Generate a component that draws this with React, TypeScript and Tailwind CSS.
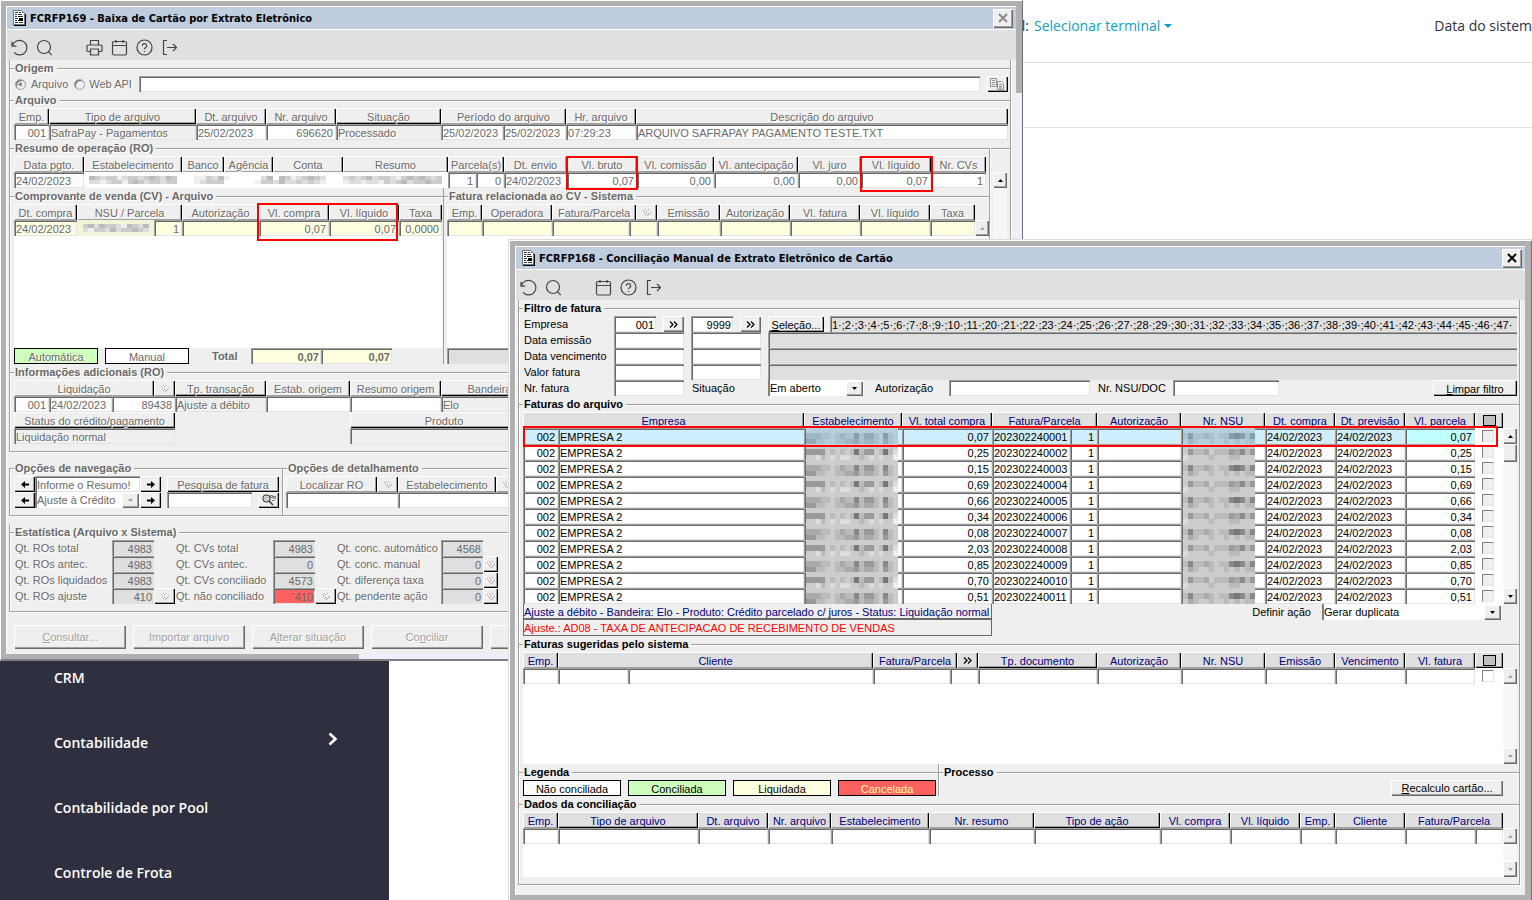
import type { ReactNode } from "react";

type Head = { label?: string; span?: number; raised?: boolean; icon?: ReactNode; overlay?: string };
type Cell = { text?: string; span?: number; className?: string; node?: ReactNode; bare?: boolean };
type Col = { w?: string; right?: boolean };

const RAISED =
  "shadow-[inset_1px_1px_0_#fff,inset_-1px_-1px_0_#000,inset_-2px_-2px_0_#a0a0a0]";
const SOFT =
  "shadow-[inset_1px_1px_0_#fff,inset_-1px_-1px_0_#696969,inset_-2px_-2px_0_#a0a0a0]";
const SUNKEN =
  "shadow-[inset_1px_1px_0_#a0a0a0,inset_2px_2px_0_#696969,inset_-1px_-1px_0_#e3e3e3]";
const EMBOSS = "[text-shadow:1px_1px_0_#fff]";

/* ---------- icons ---------- */

const DocIcon = () => (
  <svg width="13" height="16" viewBox="0 0 13 16" shapeRendering="crispEdges" aria-hidden="true">
    <path d="M0 0h9v1h1v1h1v1h1v12H0z" fill="#777" />
    <path d="M1 1h8v2h2v11H1z" fill="#fff" />
    <path d="M12 4h1v12H1v-1h11z" fill="#000" />
    <path
      d="M2 2h3v1H2zM6 2h2v1H6zM2 4h2v1H2zM5 4h4v1H5zM2 6h2v1H2zM7 6h3v1H7zM2 8h3v1H2zM2 10h2v1H2zM2 12h3v1H2zM6 12h4v1H6z"
      fill="#333"
    />
    <path d="M5 6h2v1H5zM6 8h4v2H6zM5 10h5v1H5z" fill="#000" />
  </svg>
);

const iconPaths: Record<string, ReactNode> = {
  Atualizar: <path d="M1 2.8v4.4h4.4M1.4 7A7.3 7.3 0 1 1 3 13.4" />,
  Pesquisar: (
    <>
      <circle cx="8" cy="8" r="6.5" />
      <path d="m12.6 12.8 3.2 3.4" />
    </>
  ),
  Imprimir: (
    <>
      <path d="M4.5 6V1.5h8V6M4.5 12.5H1.8a.8.8 0 0 1-.8-.8V7a1 1 0 0 1 1-1h13a1 1 0 0 1 1 1v4.7a.8.8 0 0 1-.8.8h-2.7" />
      <path d="M4.5 10h8v6h-8z" />
    </>
  ),
  Agenda: (
    <>
      <path d="M1.5 4A1.5 1.5 0 0 1 3 2.5h11A1.5 1.5 0 0 1 15.500 4v10.500A1.5 1.5 0 0 1 14 16H3a1.5 1.5 0 0 1-1.500-1.500zM1.500 6.500h14" />
      <path d="M5 1v3M12 1v3" />
    </>
  ),
  Ajuda: (
    <>
      <circle cx="8.5" cy="8.5" r="7.5" />
      <path d="M6.3 6.8a2.2 2.2 0 1 1 3.2 2c-.8.4-1 .8-1 1.5M8.5 12v1" />
    </>
  ),
  Sair: <path d="M6 1.5H2.5v14H6M6 8.5h9.5M12 5l3.5 3.500L12 12" />,
};

const ToolIcon = ({ name }: { name: string }) => (
  <button type="button" aria-label={name} className="flex h-7 w-[25px] items-center justify-center">
    <svg width="17" height="17" viewBox="0 0 17 17" fill="none" stroke="#444" strokeWidth="1.2" strokeLinejoin="round">
      {iconPaths[name]}
    </svg>
  </button>
);

const Chevrons = ({ muted }: { muted?: boolean }) =>
  muted ? (
    <svg width="10" height="9" viewBox="0 0 10 9" fill="#a0a0a0" shapeRendering="crispEdges" aria-hidden="true">
      <path d="M1 2h1v1H1zM3 1h1v1H3zM2 4h1v1H2zM4 3h1v1H4zM6 1h1v1H6zM3 6h1v1H3zM4 5h1v1H4zM7 5h1v1H7zM8 4h1v1H8zM6 6h1v1H6zM5 7h1v1H5z" />
    </svg>
  ) : (
    <svg width="9" height="7" viewBox="0 0 9 7" fill="none" stroke="#000" aria-hidden="true">
      <path d="M1 .5l3 3-3 3M5 .5l3 3-3 3" strokeWidth="1.2" />
    </svg>
  );

const Triangle = ({ down, muted }: { down?: boolean; muted?: boolean }) => (
  <svg width="5" height="3" viewBox="0 0 5 3" aria-hidden="true">
    <path d={down ? "M0 0h5L2.5 3z" : "M0 3h5L2.5 0z"} fill={muted ? "#a0a0a0" : "#000"} />
  </svg>
);

const Arrow = ({ left }: { left?: boolean }) => (
  <svg width="8" height="7" viewBox="0 0 8 7" aria-hidden="true">
    <path d={left ? "M0 3.5 4 0v2.5h4v2H4V7z" : "M8 3.5 4 0v2.5H0v2h4V7z"} />
  </svg>
);

const BoxIcon = () => <span className="block h-[11px] w-[13px] border border-black bg-[#c0c0c0]" />;

// Grey block pattern over hidden values: one hex digit per block
const Mosaic = ({ rows, tint, base }: { rows: string[]; tint?: boolean; base?: string }) => {
  const cols = rows[0].length;
  return (
    <svg
      className="block h-4 w-full"
      viewBox={`0 0 ${cols} ${rows.length}`}
      preserveAspectRatio="none"
      shapeRendering="crispEdges"
      aria-hidden="true"
    >
      <rect width={cols} height={rows.length} fill={base ?? "#cdcdcd"} />
      {rows.map((row, y) =>
        row.split("").map((c, x) => {
          if (c === ".") return null;
          const v = parseInt(c, 16) * 17;
          return <rect key={`${x}-${y}`} x={x} y={y} width="1" height="1" fill={`rgb(${v},${v},${v})`} />;
        })
      )}
      {tint && <rect width={cols} height={rows.length} fill="#7fd4ff" opacity="0.3" />}
    </svg>
  );
};

/* ---------- building blocks ---------- */

const Grid = ({
  cols,
  head,
  rows,
  headClass,
  cellClass = "bg-white",
  selected,
}: {
  cols: Col[];
  head: Head[];
  rows: Cell[][];
  headClass: string;
  cellClass?: string;
  selected?: number;
}) => (
  <table className="w-full table-fixed border-collapse">
    <colgroup>
      {cols.map((c, i) => (
        <col key={i} className={c.w} />
      ))}
    </colgroup>
    <thead>
      <tr className="h-4">
        {head.map((h, i) => (
          <th
            key={i}
            colSpan={h.span}
            className={`relative h-4 p-0 font-normal whitespace-nowrap ${headClass} ${
              h.raised
                ? RAISED
                : "shadow-[inset_1px_1px_0_#fff,inset_-1px_0_0_#000,inset_-2px_-1px_0_#a0a0a0]"
            }`}
          >
            <span className="flex h-4 items-center justify-center pt-px">{h.icon ?? h.label}</span>
            {h.overlay && <span className={`absolute z-10 border-2 border-[#ff0000] ${h.overlay}`} />}
          </th>
        ))}
      </tr>
    </thead>
    <tbody>
      {rows.map((row, r) => {
        let at = 0;
        return (
          <tr key={r} className="relative h-4">
            {row.map((cell, i) => {
              const col = cols[at];
              at += cell.span ?? 1;
              const bg = cell.className ?? (selected === r ? "bg-[#cfefff]" : cellClass);
              return (
                <td
                  key={i}
                  colSpan={cell.span}
                  className={`h-4 overflow-hidden p-0 whitespace-nowrap ${bg} ${cell.bare ? "" : SUNKEN}`}
                >
                  {cell.node ?? (
                    <span className={`block h-4 pt-px leading-4 ${col?.right ? "pr-[3px] text-right" : "pl-[2px]"}`}>
                      {cell.text}
                    </span>
                  )}
                  {selected === r && i === row.length - 1 && (
                    <span className="absolute -top-[2px] right-[5px] left-0 z-10 h-[21px] border-2 border-[#ff0000]" />
                  )}
                </td>
              );
            })}
          </tr>
        );
      })}
    </tbody>
  </table>
);

const GroupTitle = ({ children, first }: { children: ReactNode; first?: boolean }) => (
  <div className={`flex h-4 items-center ${first ? "-mt-2" : ""}`}>
    <span className="h-px w-1 bg-[#a0a0a0] shadow-[0_1px_0_#fff]" />
    <h2 className="pr-[3px] pl-px text-[11px] leading-4 font-bold whitespace-nowrap">{children}</h2>
    <span className="h-px flex-1 bg-[#a0a0a0] shadow-[0_1px_0_#fff]" />
  </div>
);

const Box = ({ children, className = "" }: { children: ReactNode; className?: string }) => (
  <section
    className={`border-x border-b border-[#a0a0a0] pb-[7px] shadow-[1px_1px_0_#fff,inset_1px_0_0_#fff] ${className}`}
  >
    {children}
  </section>
);

const ScrollBar = ({ muted, thumb }: { muted?: boolean; thumb?: boolean }) => (
  <div className="flex w-[14px] shrink-0 flex-col bg-[#f6f6f6]">
    <button type="button" aria-label="Rolar para cima" className={`flex h-4 items-center justify-center bg-[#efefef] ${SOFT}`}>
      <Triangle muted={muted} />
    </button>
    {thumb && <span className={`h-[18px] bg-[#efefef] ${SOFT}`} />}
    <span className="flex-1" />
    <button type="button" aria-label="Rolar para baixo" className={`flex h-4 items-center justify-center bg-[#efefef] ${SOFT}`}>
      <Triangle down muted={muted} />
    </button>
  </div>
);

const TitleBar = ({ title, disabled }: { title: string; disabled?: boolean }) => (
  <header className="flex h-[23px] items-center border-b border-white bg-[#bfcddf] pr-[3px] pl-[6px]">
    <DocIcon />
    <h1 className="flex-1 pt-px pl-1 font-['DejaVu_Sans_Condensed','DejaVu_Sans',sans-serif] text-[11px] font-bold text-black">
      {title}
    </h1>
    <button
      type="button"
      aria-label="Fechar"
      disabled={disabled}
      className={`flex h-[19px] w-5 items-center justify-center bg-[#efefef] ${SOFT}`}
    >
      <svg width="10" height="10" viewBox="0 0 10 10" stroke={disabled ? "#8a8a8a" : "#000"} strokeWidth="2">
        <path d="M1 1l8 8M9 1L1 9" />
      </svg>
    </button>
  </header>
);

const Field = ({ label, value, className }: { label: string; value?: string; className: string }) => (
  <input aria-label={label} defaultValue={value} className={`block h-4 min-w-0 px-[2px] pt-px outline-none ${SUNKEN} ${className}`} />
);

const Select = ({ id, value, className, muted }: { id: string; value: string; className: string; muted?: boolean }) => (
  <div className={`relative h-4 ${className}`}>
    <select
      id={id}
      aria-label={value}
      defaultValue={value}
      className="block h-4 w-full appearance-none border-l-2 border-[#808080] bg-white outline-none"
    >
      <option>{value}</option>
    </select>
    <span className={`pointer-events-none absolute right-px bottom-0 flex h-[15px] w-[17px] items-center justify-center bg-[#efefef] ${SOFT}`}>
      <Triangle down muted={muted} />
    </span>
  </div>
);

const MarkButton = () => (
  <button type="button" aria-label="Detalhar" className={`flex h-4 w-[21px] items-center justify-center ${RAISED}`}>
    <Chevrons muted />
  </button>
);

/* ---------- FCRFP169 ---------- */

const R = "bg-[#efefef] text-[#696969] [text-shadow:1px_1px_0_#fff]";

const mask = (rows: string[], base = "#fff"): Cell => ({ node: <Mosaic rows={rows} base={base} />, bare: true });

const stats = [
  {
    label: "w-[97px]",
    items: [
      ["Qt. ROs total", "4983", false],
      ["Qt. ROs antec.", "4983", false],
      ["Qt. ROs liquidados", "4983", false],
      ["Qt. ROs ajuste", "410", true],
    ],
  },
  {
    label: "w-[97px]",
    items: [
      ["Qt. CVs total", "4983", false],
      ["Qt. CVs antec.", "0", false],
      ["Qt. CVs conciliado", "4573", false],
      ["Qt. não conciliado", "410", true],
    ],
  },
  {
    label: "w-[104px]",
    items: [
      ["Qt. conc. automático", "4568", false],
      ["Qt. conc. manual", "0", true],
      ["Qt. diferença taxa", "0", true],
      ["Qt. pendente ação", "0", true],
    ],
  },
] as { label: string; items: [string, string, boolean][] }[];

const BaixaWindow = () => (
  <div className="absolute top-0 right-[509px] left-0 border-t border-r border-b-2 border-l border-t-white border-r-[#707070] border-b-[#808080] border-l-white bg-[#b0b0b0] text-[#696969]">
    <div className="flex">
      <div className="min-w-0 flex-1 pt-[5px] pl-[5px]">
        <div className="border-t border-l border-white bg-[#efefef]">
          <TitleBar title="FCRFP169 - Baixa de Cartão por Extrato Eletrônico" disabled />
          <div className="flex h-[30px] bg-[#e0e0e0] pt-[3px]">
            <ToolIcon name="Atualizar" />
            <ToolIcon name="Pesquisar" />
            <span className="w-[25px]" />
            <ToolIcon name="Imprimir" />
            <ToolIcon name="Agenda" />
            <ToolIcon name="Ajuda" />
            <ToolIcon name="Sair" />
          </div>

          <div className={`pt-2 pr-[5px] pb-[5px] pl-[2px] ${EMBOSS}`}>
            <Box>
              <GroupTitle first>Origem</GroupTitle>
              <div className="flex h-4 items-center pr-[2px] pl-[5px]">
                <label className="flex items-center gap-[5px]">
                  <input
                    type="radio"
                    name="origem"
                    defaultChecked
                    className="size-[11px] appearance-none rounded-full border border-[#a0a0a0] bg-[radial-gradient(circle,#909090_2px,#efefef_2px)] shadow-[inset_1px_1px_0_#696969]"
                  />
                  Arquivo
                </label>
                <label className="ml-[6px] flex items-center gap-1">
                  <input
                    type="radio"
                    name="origem"
                    className="size-[11px] appearance-none rounded-full border border-[#a0a0a0] bg-[#efefef] shadow-[inset_1px_1px_0_#696969]"
                  />
                  Web API
                </label>
                <Field label="Caminho do arquivo" className="ml-[7px] flex-1 bg-white" />
                <button type="button" aria-label="Selecionar arquivo" className={`ml-[7px] flex h-4 w-[21px] items-center justify-center ${RAISED}`}>
                  <svg width="15" height="12" viewBox="0 0 15 12" fill="#efefef" stroke="#909090" aria-hidden="true">
                    <path d="M.5.5h6v8h-6zM7.5 3.5h4l2 2v6h-6z" />
                    <path d="M2 2.5h3M2 4.5h3M2 6.5h3M9 6.5h3M9 8.5h3M9 10h3" />
                  </svg>
                </button>
              </div>

              <GroupTitle>Arquivo</GroupTitle>
              <div className="pr-[2px] pl-1">
                <Grid
                  headClass={R}
                  cols={[
                    { w: "w-[35px]", right: true },
                    { w: "w-[147px]" },
                    { w: "w-[70px]" },
                    { w: "w-[70px]", right: true },
                    { w: "w-[105px]" },
                    { w: "w-[62px]" },
                    { w: "w-[63px]" },
                    { w: "w-[70px]" },
                    {},
                  ]}
                  head={[
                    { label: "Emp." },
                    { label: "Tipo de arquivo", raised: true },
                    { label: "Dt. arquivo" },
                    { label: "Nr. arquivo" },
                    { label: "Situação", raised: true },
                    { label: "Período do arquivo", span: 2 },
                    { label: "Hr. arquivo" },
                    { label: "Descrição do arquivo" },
                  ]}
                  rows={[
                    [
                      { text: "001" },
                      { text: "SafraPay - Pagamentos", className: "bg-[#efefef]" },
                      { text: "25/02/2023" },
                      { text: "696620" },
                      { text: "Processado", className: "bg-[#efefef]" },
                      { text: "25/02/2023" },
                      { text: "25/02/2023" },
                      { text: "07:29:23" },
                      { text: "ARQUIVO SAFRAPAY PAGAMENTO TESTE.TXT" },
                    ],
                  ]}
                />
              </div>

              <GroupTitle>Resumo de operação (RO)</GroupTitle>
              <div className="-mt-2 flex">
                <div className="min-w-0 flex-1 border-r border-[#a0a0a0] pt-2 shadow-[1px_0_0_#fff]">
                  <div className="pr-[3px] pl-1">
                    <Grid
                      headClass={R}
                      cols={[
                        { w: "w-[70px]" },
                        { w: "w-[98px]" },
                        { w: "w-[42px]" },
                        { w: "w-[49px]" },
                        { w: "w-[70px]" },
                        { w: "w-[105px]" },
                        { w: "w-[28px]", right: true },
                        { w: "w-[28px]", right: true },
                        { w: "w-[63px]" },
                        { w: "w-[70px]", right: true },
                        { w: "w-[77px]", right: true },
                        { w: "w-[84px]", right: true },
                        { w: "w-[63px]", right: true },
                        { w: "w-[70px]", right: true },
                        { right: true },
                      ]}
                      head={[
                        { label: "Data pgto." },
                        { label: "Estabelecimento" },
                        { label: "Banco" },
                        { label: "Agência" },
                        { label: "Conta" },
                        { label: "Resumo" },
                        { label: "Parcela(s)", span: 2 },
                        { label: "Dt. envio" },
                        { label: "Vl. bruto", overlay: "top-0 -left-px h-[34px] w-[72px]" },
                        { label: "Vl. comissão" },
                        { label: "Vl. antecipação" },
                        { label: "Vl. juro" },
                        { label: "Vl. líquido", overlay: "top-0 -left-px h-9 w-[73px]" },
                        { label: "Nr. CVs" },
                      ]}
                      rows={[
                        [
                          { text: "24/02/2023" },
                          mask(["ffffffffffffffffff", "fbcdccedccdcbcdbcf", "fddedccecbcdccdccf", "ffffffffffffffffff"]),
                          mask(["fffffff", "ffeecdb", "ffedccc", "fffffff"]),
                          mask(["ffffffff", "efffffdb", "fffffecc", "ffffffff"]),
                          mask(["ffffffffffff", "fbcedcbcdfff", "dbddcdcdefff", "ffffffffffff"]),
                          mask(["ffffffffffffffffff", "dcdcbdccdecbcbcdcf", "eddeddecdcbdccbccf", "ffffffffffffffffff"]),
                          { text: "1" },
                          { text: "0" },
                          { text: "24/02/2023" },
                          { text: "0,07" },
                          { text: "0,00" },
                          { text: "0,00" },
                          { text: "0,00" },
                          { text: "0,07" },
                          { text: "1" },
                        ],
                      ]}
                    />
                  </div>

                  <div className="flex">
                    <div className="w-[434px] border-r border-[#a0a0a0]">
                      <GroupTitle>Comprovante de venda (CV) - Arquivo</GroupTitle>
                      <div className="h-36 pr-px pl-1">
                        <div className="h-full bg-white">
                          <Grid
                            headClass={R}
                            cellClass="bg-[#ffffdf]"
                            cols={[
                              { w: "w-[63px]" },
                              { w: "w-[77px]" },
                              { w: "w-[28px]", right: true },
                              { w: "w-[77px]" },
                              { w: "w-[70px]", right: true },
                              { w: "w-[70px]", right: true },
                              { right: true },
                            ]}
                            head={[
                              { label: "Dt. compra" },
                              { label: "NSU / Parcela", span: 2 },
                              { label: "Autorização" },
                              { label: "Vl. compra", overlay: "-top-px -left-[2px] h-[38px] w-[141px]" },
                              { label: "Vl. líquido" },
                              { label: "Taxa" },
                            ]}
                            rows={[
                              [
                                { text: "24/02/2023" },
                                mask(["..............", ".cbdbccdebcdb.", ".deccdbdccbcd.", ".............."], "#f4f4d8"),
                                { text: "1" },
                                { text: "" },
                                { text: "0,07" },
                                { text: "0,07" },
                                { text: "0,0000" },
                              ],
                            ]}
                          />
                        </div>
                      </div>
                      <div className="flex h-4 items-center pl-1">
                        <span className="flex h-4 w-[84px] items-center justify-center border border-black bg-[#cfffbf] pt-px">Automática</span>
                        <span className="ml-[7px] flex h-4 w-[84px] items-center justify-center border border-black bg-white pt-px">Manual</span>
                        <strong className="w-[62px] pl-[23px]">Total</strong>
                        <Field label="Total compra" value="0,07" className="w-[70px] bg-[#ffffdf] text-right font-bold" />
                        <Field label="Total líquido" value="0,07" className="w-[71px] bg-[#ffffdf] text-right font-bold" />
                      </div>
                    </div>
                    <div className="min-w-0 flex-1">
                      <GroupTitle>Fatura relacionada ao CV - Sistema</GroupTitle>
                      <div className="flex h-36 pl-[3px]">
                        <div className="min-w-0 flex-1 bg-white">
                          <Grid
                            headClass={R}
                            cellClass="bg-[#ffffdf]"
                            cols={[
                              { w: "w-[35px]" },
                              { w: "w-[70px]" },
                              { w: "w-[77px]" },
                              { w: "w-[7px]" },
                              { w: "w-[21px]" },
                              { w: "w-[63px]" },
                              { w: "w-[70px]" },
                              { w: "w-[70px]" },
                              { w: "w-[70px]" },
                              {},
                            ]}
                            head={[
                              { label: "Emp." },
                              { label: "Operadora" },
                              { label: "Fatura/Parcela", span: 2 },
                              { icon: <Chevrons muted /> },
                              { label: "Emissão" },
                              { label: "Autorização" },
                              { label: "Vl. fatura" },
                              { label: "Vl. líquido" },
                              { label: "Taxa" },
                            ]}
                            rows={[[{}, {}, {}, { span: 2 }, {}, {}, {}, {}, {}]]}
                          />
                        </div>
                        <div className="flex bg-[#efefef] pt-4">
                          <ScrollBar muted />
                        </div>
                      </div>
                      <Field label="Total fatura" className="ml-[3px] w-96 bg-[#dfdfdf]" />
                    </div>
                  </div>
                </div>
                <div className="flex w-[20px] justify-center pt-6">
                  <ScrollBar />
                </div>
              </div>

              <GroupTitle>Informações adicionais (RO)</GroupTitle>
              <div className="pr-[2px] pl-1">
                <Grid
                  headClass={R}
                  cols={[
                    { w: "w-[35px]", right: true },
                    { w: "w-[63px]" },
                    { w: "w-[42px]", right: true },
                    { w: "w-[21px]", right: true },
                    { w: "w-[91px]" },
                    { w: "w-[84px]" },
                    { w: "w-[91px]" },
                    { w: "w-[97px]" },
                    {},
                  ]}
                  head={[
                    { label: "Liquidação", span: 3 },
                    { icon: <Chevrons muted /> },
                    { label: "Tp. transação", raised: true },
                    { label: "Estab. origem" },
                    { label: "Resumo origem" },
                    { label: "Bandeira", raised: true },
                    {},
                  ]}
                  rows={[
                    [
                      { text: "001" },
                      { text: "24/02/2023" },
                      { text: "89438", span: 2 },
                      { text: "Ajuste a débito", className: "bg-[#efefef]" },
                      {},
                      {},
                      { text: "Elo", className: "bg-[#efefef]" },
                      {},
                    ],
                  ]}
                />
                <div className="flex">
                  <div className="w-[161px]">
                    <Grid
                      headClass={R}
                      cellClass="bg-[#efefef]"
                      cols={[{}]}
                      head={[{ label: "Status do crédito/pagamento", raised: true }]}
                      rows={[[{ text: "Liquidação normal" }]]}
                    />
                  </div>
                  <div className="ml-[175px] w-[188px]">
                    <Grid headClass={R} cellClass="bg-[#efefef]" cols={[{}]} head={[{ label: "Produto", raised: true }]} rows={[[{}]]} />
                  </div>
                </div>
              </div>
            </Box>

            <Box className="mt-4">
              <div className="-mb-[7px] flex">
                <div className="w-[273px] border-r border-[#a0a0a0] pb-[7px] shadow-[1px_0_0_#fff]">
                  <GroupTitle first>Opções de navegação</GroupTitle>
                  <div className="flex pl-1">
                    <div>
                      <div className="flex">
                        <button type="button" aria-label="Resumo anterior" className={`flex h-4 w-[21px] items-center justify-center ${RAISED}`}>
                          <Arrow left />
                        </button>
                        <Field label="Resumo" value="Informe o Resumo!" className="w-[105px] bg-white" />
                        <button type="button" aria-label="Próximo resumo" className={`flex h-4 w-[21px] items-center justify-center ${RAISED}`}>
                          <Arrow />
                        </button>
                      </div>
                      <div className="flex">
                        <button type="button" aria-label="Ajuste anterior" className={`flex h-4 w-[21px] items-center justify-center ${RAISED}`}>
                          <Arrow left />
                        </button>
                        <Select id="ajuste" value="Ajuste à Crédito" muted className="w-[105px]" />
                        <button type="button" aria-label="Próximo ajuste" className={`flex h-4 w-[21px] items-center justify-center ${RAISED}`}>
                          <Arrow />
                        </button>
                      </div>
                    </div>
                    <div className="ml-[6px] w-[112px]">
                      <label htmlFor="pesquisa" className={`flex h-4 items-center justify-center pt-px ${RAISED}`}>
                        Pesquisa de fatura
                      </label>
                      <div className="flex justify-between">
                        <input id="pesquisa" className={`h-4 w-[85px] bg-white outline-none ${SUNKEN}`} />
                        <button type="button" aria-label="Pesquisar fatura" className={`flex h-4 w-[21px] items-center justify-center ${RAISED}`}>
                          <svg width="14" height="12" viewBox="0 0 14 12" fill="none" stroke="#333" aria-hidden="true">
                            <circle cx="4.5" cy="4.5" r="3.7" fill="#ccc" />
                            <path d="M7 7l4 4" strokeWidth="1.5" />
                            <path d="M8.5 1.500h2v2h-2zM11.500 2.500h2v2h-2zM9.500 6.500h3" stroke="#777" />
                          </svg>
                        </button>
                      </div>
                    </div>
                  </div>
                </div>
                <div className="min-w-0 flex-1">
                  <GroupTitle first>Opções de detalhamento</GroupTitle>
                  <div className="pr-[2px] pl-[3px]">
                    <Grid
                      headClass={R}
                      cols={[{ w: "w-[91px]" }, { w: "w-[21px]" }, { w: "w-[98px]" }, { w: "w-[21px]" }, {}]}
                      head={[
                        { label: "Localizar RO" },
                        { icon: <Chevrons muted /> },
                        { label: "Estabelecimento" },
                        { icon: <Chevrons muted /> },
                        {},
                      ]}
                      rows={[[{ span: 2 }, { span: 2 }, {}]]}
                    />
                  </div>
                </div>
              </div>
            </Box>

            <Box className="mt-4">
              <GroupTitle first>Estatística (Arquivo x Sistema)</GroupTitle>
              <div className="flex pl-[5px]">
                {stats.map((group, g) => (
                  <div key={g} className="w-[161px]">
                    {group.items.map(([label, value, detail]) => (
                      <div key={label} className="flex h-4 items-center whitespace-nowrap">
                        <span className={`shrink-0 ${group.label}`}>{label}</span>
                        <Field
                          label={label}
                          value={value}
                          className={`w-[42px] shrink-0 text-right [text-shadow:none] ${label === "Qt. não conciliado" ? "bg-[#ff6060]" : "bg-[#dfdfdf]"}`}
                        />
                        {detail && <MarkButton />}
                      </div>
                    ))}
                  </div>
                ))}
              </div>
            </Box>

            <div className="mt-[13px] flex gap-[7px] pl-[5px]">
              {[
                <><u>C</u>onsultar...</>,
                <>Importar arquivo</>,
                <>A<u>l</u>terar situação</>,
                <>Co<u>n</u>ciliar</>,
                <></>,
              ].map((label, i) => (
                <button key={i} type="button" disabled className={`h-6 w-28 text-[#a0a0a0] ${EMBOSS} ${SOFT}`}>
                  {label}
                </button>
              ))}
            </div>
          </div>
        </div>
        <div className="flex h-[5px]">
          <span className="w-[353px]" />
          <span className="flex-1 bg-[#efefff]" />
        </div>
      </div>
      <div className="w-[6px] bg-[#efefff]">
        <div className="h-[92px] bg-[#b0b0b0]" />
      </div>
    </div>
  </div>
);

/* ---------- FCRFP168 ---------- */

const B = "bg-[#dfdfdf] text-[#000080]";

const faturas = ["0,07", "0,25", "0,15", "0,69", "0,66", "0,34", "0,08", "2,03", "0,85", "0,70", "0,51"];

const estabMask = [
  ["aaabbcbabb8b99bc8bc", "99bbccbbaa9baabc9bc"],
  ["9999cbcbcb7b99cb7bd", "ccdbcdcddccbcdcdcce"],
];
const nsuMask = [
  ["b8bbabcbb878b8", "cabccbccbcbcbb"],
  ["c9bbacbbb9a8b9", "dccccbcccbbccc"],
];

const empresas = [1, 2, 3, 4, 5, 6, 7, 8, 9, 10, 11].concat(Array.from({ length: 28 }, (_, i) => i + 20));

const CheckCell = ({ label, gray }: { label: string; gray?: boolean }) => (
  <span className="flex h-4 items-center justify-center pr-[2px]">
    <input
      type="checkbox"
      aria-label={label}
      className={`size-3 appearance-none border border-t-[#808080] border-r-[#e3e3e3] border-b-[#e3e3e3] border-l-[#808080] ${
        gray ? "bg-[#efefef]" : "bg-white"
      }`}
    />
  </span>
);

const Legend = ({ className, children }: { className: string; children: ReactNode }) => (
  <span className={`flex h-4 w-[98px] items-center justify-center border border-black pt-px ${className}`}>{children}</span>
);

const ConciliacaoWindow = () => (
  <div className="absolute top-[239px] right-0 left-[508px] border-t border-l border-[#dcdcdc]">
    <div className="border-t border-r border-b border-l border-t-white border-r-[#707070] border-b-[#707070] border-l-white bg-[#b0b0b0] pt-[5px] pr-[6px] pb-[5px] pl-[5px] text-black">
      <div className="border-t border-l border-white bg-[#efefef]">
        <TitleBar title="FCRFP168 - Conciliação Manual de Extrato Eletrônico de Cartão" />
        <div className="flex h-[30px] bg-[#e0e0e0] pt-[3px]">
          <ToolIcon name="Atualizar" />
          <ToolIcon name="Pesquisar" />
          <span className="w-[25px]" />
          <ToolIcon name="Agenda" />
          <ToolIcon name="Ajuda" />
          <ToolIcon name="Sair" />
        </div>

        <div className="pt-2 pr-[5px] pb-[10px] pl-[2px]">
          <Box>
            <GroupTitle first>Filtro de fatura</GroupTitle>
            <div className="pr-[2px] pl-[5px]">
              <div className="flex h-4 items-center">
                <label htmlFor="empresa" className="w-[90px]">Empresa</label>
                <input id="empresa" defaultValue="001" className={`h-4 w-[42px] bg-white px-[2px] pt-px text-right outline-none ${SUNKEN}`} />
                <button type="button" aria-label="Buscar empresa inicial" className={`ml-[7px] flex h-4 w-[21px] items-center justify-center ${SOFT}`}>
                  <Chevrons />
                </button>
                <Field label="Empresa final" value="9999" className="ml-[7px] w-[42px] bg-white text-right" />
                <button type="button" aria-label="Buscar empresa final" className={`ml-[7px] flex h-4 w-[21px] items-center justify-center ${SOFT}`}>
                  <Chevrons />
                </button>
                <button type="button" className={`ml-[7px] flex h-4 w-14 items-center justify-center pt-px ${RAISED}`}>
                  <span><u>S</u>eleção...</span>
                </button>
                <Field
                  label="Empresas selecionadas"
                  value={empresas.map((n) => `${n}·`).join(";")}
                  className="ml-[6px] flex-1 bg-[#dfdfdf]"
                />
              </div>
              {["Data emissão", "Data vencimento", "Valor fatura"].map((label, i) => (
                <div key={label} className="flex h-4 items-center">
                  <label htmlFor={`filtro-${i}`} className="w-[90px]">{label}</label>
                  <input id={`filtro-${i}`} className={`h-4 w-[70px] bg-white outline-none ${SUNKEN}`} />
                  <Field label={`${label} final`} className="ml-[7px] w-[70px] bg-white" />
                  <Field label={`${label} seleção`} className="ml-[7px] flex-1 bg-[#dfdfdf]" />
                </div>
              ))}
              <div className="flex h-4 items-center">
                <label htmlFor="nr-fatura" className="w-[90px]">Nr. fatura</label>
                <input id="nr-fatura" className={`h-4 w-[70px] bg-white outline-none ${SUNKEN}`} />
                <label htmlFor="situacao" className="ml-2 w-[76px]">Situação</label>
                <Select id="situacao" value="Em aberto" className="w-[96px]" />
                <label htmlFor="autorizacao" className="ml-[11px] w-[74px]">Autorização</label>
                <input id="autorizacao" className={`h-4 w-[141px] bg-white outline-none ${SUNKEN}`} />
                <label htmlFor="nsu-doc" className="ml-2 w-[75px]">Nr. NSU/DOC</label>
                <input id="nsu-doc" className={`h-4 w-[106px] bg-white outline-none ${SUNKEN}`} />
                <button type="button" className={`ml-auto flex h-4 w-[84px] items-center justify-center pt-px ${RAISED}`}>
                  <span><u>L</u>impar filtro</span>
                </button>
              </div>
            </div>

            <GroupTitle>Faturas do arquivo</GroupTitle>
            <div className="flex pr-[2px] pl-1">
              <div className="min-w-0 flex-1">
                <Grid
                  headClass={B}
                  selected={0}
                  cols={[
                    { w: "w-[35px]", right: true },
                    {},
                    { w: "w-[98px]" },
                    { w: "w-[90px]", right: true },
                    { w: "w-[78px]" },
                    { w: "w-[27px]", right: true },
                    { w: "w-[84px]" },
                    { w: "w-[84px]" },
                    { w: "w-[70px]" },
                    { w: "w-[70px]" },
                    { w: "w-[70px]", right: true },
                    { w: "w-[28px]" },
                  ]}
                  head={[
                    { label: "Empresa", span: 2 },
                    { label: "Estabelecimento" },
                    { label: "Vl. total compra" },
                    { label: "Fatura/Parcela", span: 2 },
                    { label: "Autorização" },
                    { label: "Nr. NSU" },
                    { label: "Dt. compra" },
                    { label: "Dt. previsão" },
                    { label: "Vl. parcela" },
                    { icon: <BoxIcon />, raised: true },
                  ]}
                  rows={faturas.map((valor, i) => {
                    const [e1, e2] = estabMask[i % 2];
                    const [n1, n2] = nsuMask[i % 2];
                    return [
                      { text: "002" },
                      { text: "EMPRESA 2" },
                      {
                        node: (
                          <div className="pr-1 pl-[2px]">
                            <Mosaic tint={i === 0} rows={["...................", e1, e2]} />
                          </div>
                        ),
                      },
                      { text: valor },
                      { text: `2023022400${String(i + 1).padStart(2, "0")}` },
                      { text: "1" },
                      {},
                      {
                        node: (
                          <div className="pr-[10px] pl-[2px]">
                            <Mosaic tint={i === 0} rows={["..............", n1, n2]} />
                          </div>
                        ),
                      },
                      { text: "24/02/2023" },
                      { text: "24/02/2023" },
                      { text: valor, className: i === 0 ? "bg-[#bfffff]" : undefined },
                      { node: <CheckCell gray label={`Selecionar fatura ${i + 1}`} />, bare: true, className: "bg-white" },
                    ];
                  })}
                />
              </div>
              <div className="flex pt-4">
                <ScrollBar thumb />
              </div>
            </div>

            <div className="flex h-8 pr-[17px] pl-1">
              <div className="w-[469px] whitespace-nowrap">
                <p className="h-4 border-x border-b-2 border-[#696969] leading-4 text-[#000080]">
                  Ajuste a débito - Bandeira: Elo - Produto: Crédito parcelado c/ juros - Status: Liquidação normal
                </p>
                <p className="h-4 border-x border-b border-[#696969] leading-4 text-[#ff0000]">
                  Ajuste.: AD08 - TAXA DE ANTECIPACAO DE RECEBIMENTO DE VENDAS
                </p>
              </div>
              <label htmlFor="acao" className="mr-[11px] ml-auto leading-4">Definir ação</label>
              <Select id="acao" value="Gerar duplicata" className="w-[180px]" />
            </div>

            <GroupTitle>Faturas sugeridas pelo sistema</GroupTitle>
            <div className="flex h-28 pr-[2px] pl-1">
              <div className="min-w-0 flex-1 bg-white">
                <Grid
                  headClass={B}
                  cols={[
                    { w: "w-[35px]" },
                    { w: "w-[70px]" },
                    {},
                    { w: "w-[77px]" },
                    { w: "w-[7px]" },
                    { w: "w-[21px]" },
                    { w: "w-[119px]" },
                    { w: "w-[84px]" },
                    { w: "w-[84px]" },
                    { w: "w-[70px]" },
                    { w: "w-[70px]" },
                    { w: "w-[70px]" },
                    { w: "w-[28px]" },
                  ]}
                  head={[
                    { label: "Emp." },
                    { label: "Cliente", span: 2 },
                    { label: "Fatura/Parcela", span: 2 },
                    { icon: <Chevrons /> },
                    { label: "Tp. documento", raised: true },
                    { label: "Autorização" },
                    { label: "Nr. NSU" },
                    { label: "Emissão" },
                    { label: "Vencimento" },
                    { label: "Vl. fatura" },
                    { icon: <BoxIcon />, raised: true },
                  ]}
                  rows={[
                    [{}, {}, {}, {}, { span: 2 }, {}, {}, {}, {}, {}, {}, { node: <CheckCell label="Selecionar sugestão" />, bare: true }],
                  ]}
                />
              </div>
              <div className="flex bg-[#efefef] pt-4">
                <ScrollBar muted />
              </div>
            </div>

            <div className="flex">
              <div className="w-[420px] border-r border-[#a0a0a0] shadow-[1px_0_0_#fff]">
                <GroupTitle>Legenda</GroupTitle>
                <div className="flex gap-[7px] pl-1">
                  <Legend className="bg-white">Não conciliada</Legend>
                  <Legend className="bg-[#cfffbf]">Conciliada</Legend>
                  <Legend className="bg-[#ffffdf]">Liquidada</Legend>
                  <Legend className="bg-[#ff6060] text-[#ffffa0]">Cancelada</Legend>
                </div>
              </div>
              <div className="flex-1">
                <GroupTitle>Processo</GroupTitle>
                <button type="button" className={`mr-4 ml-auto flex h-4 w-28 items-center justify-center ${SOFT}`}>
                  <span><u>R</u>ecalculo cartão...</span>
                </button>
              </div>
            </div>

            <GroupTitle>Dados da conciliação</GroupTitle>
            <div className="flex h-[65px] pr-[2px] pl-1">
              <div className="min-w-0 flex-1 bg-white">
                <Grid
                  headClass={B}
                  cols={[
                    { w: "w-[35px]" },
                    { w: "w-[140px]" },
                    { w: "w-[70px]" },
                    { w: "w-[63px]" },
                    { w: "w-[98px]" },
                    {},
                    { w: "w-[126px]" },
                    { w: "w-[70px]" },
                    { w: "w-[70px]" },
                    { w: "w-[35px]" },
                    { w: "w-[70px]" },
                    { w: "w-[70px]" },
                    { w: "w-[28px]" },
                  ]}
                  head={[
                    { label: "Emp." },
                    { label: "Tipo de arquivo", raised: true },
                    { label: "Dt. arquivo" },
                    { label: "Nr. arquivo" },
                    { label: "Estabelecimento" },
                    { label: "Nr. resumo" },
                    { label: "Tipo de ação", raised: true },
                    { label: "Vl. compra" },
                    { label: "Vl. líquido" },
                    { label: "Emp." },
                    { label: "Cliente" },
                    { label: "Fatura/Parcela", span: 2 },
                  ]}
                  rows={[[{}, {}, {}, {}, {}, {}, {}, {}, {}, {}, {}, {}, {}]]}
                />
              </div>
              <div className="flex bg-[#efefef] pt-4">
                <ScrollBar muted />
              </div>
            </div>
          </Box>
        </div>
      </div>
    </div>
  </div>
);

const App = () => (
  <div className="relative flex h-screen overflow-hidden bg-white font-['Open_Sans',sans-serif] text-sm text-[#2f303f]">
    <aside className="w-[389px] shrink-0 bg-[#2f303f] pt-[645px] font-semibold text-white">
      <nav>
        {["CRM", "Contabilidade", "Contabilidade por Pool", "Controle de Frota"].map((item) => (
          <a key={item} href="#" className="flex h-[65px] items-center justify-between pr-[51px] pl-[54px]">
            {item}
            {item === "Contabilidade" && (
              <svg width="10" height="14" viewBox="0 0 10 14" fill="none" stroke="#fff" strokeWidth="2.5" className="mb-2">
                <path d="M1.5 1.5 7.5 7l-6 5.5" />
              </svg>
            )}
          </a>
        ))}
      </nav>
    </aside>
    <main className="min-w-0 flex-1">
      <header className="flex h-[63px] border-b border-[#dfdfdf] pt-4 leading-5">
        <p className="w-[640px] shrink-0 text-right">Terminal:</p>
        <a href="#" className="ml-[5px] flex items-center gap-1 self-start whitespace-nowrap text-[#0f9fbf]">
          Selecionar terminal
          <svg width="8" height="4" viewBox="0 0 8 4" fill="currentColor" aria-hidden="true">
            <path d="M0 0h8L4 4z" />
          </svg>
        </a>
        <p className="ml-auto whitespace-nowrap">Data do sistem</p>
      </header>
      <div className="h-[65px] border-b border-[#dfdfdf]" />
    </main>

    <div className="font-['Liberation_Sans',Arial,sans-serif] text-[11px] leading-4">
      <BaixaWindow />
      <ConciliacaoWindow />
    </div>
  </div>
);

export default App;
